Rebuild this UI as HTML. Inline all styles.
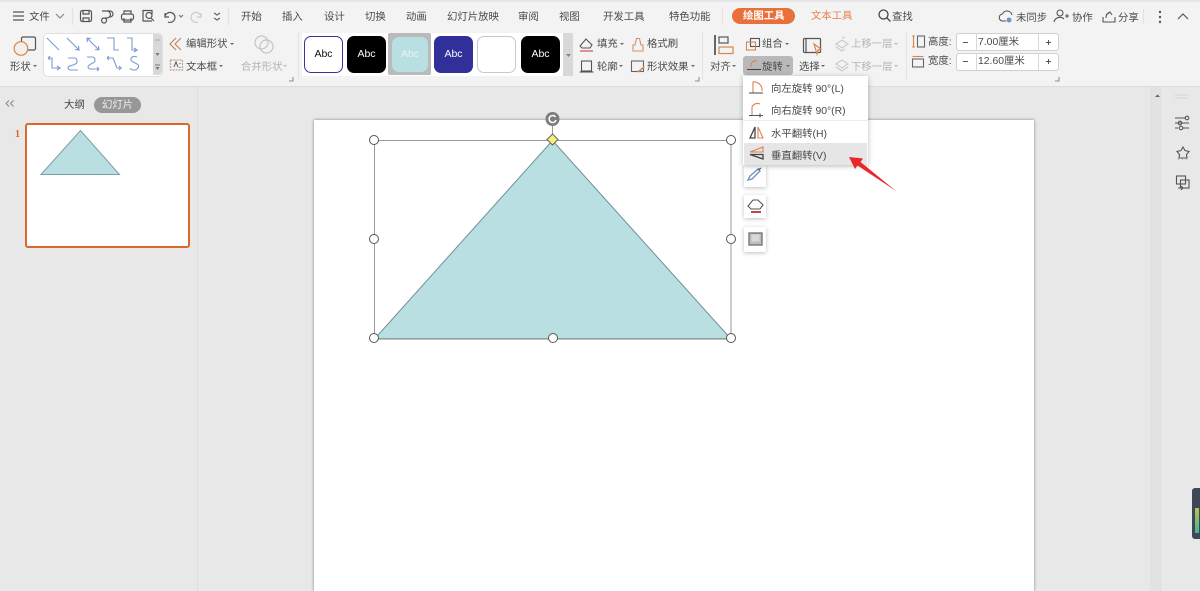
<!DOCTYPE html>
<html style="height:591px;overflow:hidden"><head><meta charset="utf-8">
<style>
html,body{margin:0;padding:0}
body{width:1200px;height:591px;overflow:hidden;position:relative;background:#e8e8e8;font-family:"Liberation Sans","Noto Sans CJK SC",sans-serif;color:#4a4a4a}
.t{position:absolute;font-size:10.4px;line-height:14px;white-space:nowrap}
.g{color:#b4b4b4}
.a{position:absolute}
.c{position:absolute;width:0;height:0;border-left:2px solid transparent;border-right:2px solid transparent;border-top:2.5px solid #666}
.c.l{border-top-color:#bbb}
svg{position:absolute;overflow:visible}
.sw{position:absolute;top:36px;width:39px;height:37px;border-radius:7px;font-size:10.5px;line-height:36px;text-align:center;box-sizing:border-box}
.tb{position:absolute;left:744px;width:22px;background:#fff;box-shadow:0 1px 4px rgba(0,0,0,.25)}
.h{position:absolute;width:8px;height:8px;border:1px solid #555;border-radius:50%;background:#fff}
</style></head><body>
<!-- ribbon -->
<div class="a" style="left:0;top:0;width:1200px;height:2px;background:#e6e6ea"></div>
<div class="a" style="left:0;top:2px;width:1200px;height:84px;background:#f3f3f3;border-bottom:1px solid #dcdcdc"></div>

<!-- top bar -->
<svg style="left:0;top:0" width="230" height="30" fill="none" stroke="#555" stroke-width="1.2">
<path d="M13 12h11M13 16h11M13 20h11"/><path d="M56 14l4 4 4-4" stroke="#888"/>
<rect x="80.500" y="10.500" width="11" height="11" rx="2"/><path d="M83 11v3h6v-3M83 22v-4h6v4"/>
<path d="M102 11h5a3 3 0 0 1 0 7h-2M107 11h3a3 3 0 0 1 0 6M104 18a2.500 2.500 0 1 0 .1 0"/>
<rect x="121.500" y="14" width="12" height="6" rx="2"/><path d="M124 14v-3h7v3M124 18v4h7v-4"/>
<path d="M152 21h-9v-10.500h9v4"/><circle cx="149" cy="15.500" r="3"/><path d="M151 18l3 3"/>
<path d="M165 13v4h4M165 17a5 5 0 1 1 3 5"/><path d="M179 15l2 2 2-2" stroke="#777"/>
<path d="M201 13v4h-4M201 17a5 5 0 1 0-3 5" stroke="#ccc"/>
<path d="M214 13l3 2 3-2M214 18l3 2 3-2" stroke="#666"/>
<path d="M72.500 8v17M228.500 8v17" stroke="#e2e2e2"/>
</svg>
<span class="t" style="left:29px;top:11px">文件</span>

<span class="t" style="left:241px;top:11px">开始</span>
<span class="t" style="left:282px;top:11px">插入</span>
<span class="t" style="left:324px;top:11px">设计</span>
<span class="t" style="left:365px;top:11px">切换</span>
<span class="t" style="left:406px;top:11px">动画</span>
<span class="t" style="left:447px;top:11px">幻灯片放映</span>
<span class="t" style="left:518px;top:11px">审阅</span>
<span class="t" style="left:559px;top:11px">视图</span>
<span class="t" style="left:603px;top:11px">开发工具</span>
<span class="t" style="left:669px;top:11px">特色功能</span>
<div class="a" style="left:722px;top:8px;width:1px;height:17px;background:#e2e2e2"></div>
<div class="a" style="left:732px;top:8px;width:63px;height:16px;border-radius:8px;background:#e8703a"></div>
<span class="t" style="left:743px;top:10px;color:#fff;font-weight:bold">绘图工具</span>
<span class="t" style="left:811px;top:10px;color:#ea8050">文本工具</span>
<svg style="left:878px;top:9px" width="14" height="14" fill="none" stroke="#444" stroke-width="1.3"><circle cx="5.500" cy="5.500" r="4.500"/><path d="M9 9l3.500 3.500"/></svg>
<span class="t" style="left:892px;top:11px">查找</span>

<svg style="left:998px;top:8px" width="170" height="18" fill="none" stroke="#555" stroke-width="1.1">
<path d="M8 13H5a3.500 3.500 0 0 1-.5-7 5 5 0 0 1 9.500 1"/><circle cx="11" cy="12" r="2.500" fill="#6f93c9" stroke="none"/>
<circle cx="62" cy="5" r="3"/><path d="M56 14a6 6 0 0 1 10-3M67 8h4M69 6v4"/>
<path d="M105 9v5h12V9M108 7l4-3 2 3M112 4c-3 1-4 3-4 6"/>
<path d="M145.500 1v15" stroke="#e2e2e2"/>
</svg>
<span class="t" style="left:1016px;top:12px">未同步</span>
<span class="t" style="left:1072px;top:12px">协作</span>
<span class="t" style="left:1118px;top:12px">分享</span>
<svg style="left:1155px;top:10px" width="40" height="14" fill="#555"><circle cx="5" cy="2" r="1.200"/><circle cx="5" cy="7" r="1.200"/><circle cx="5" cy="12" r="1.200"/><path d="M23 9l5-5 5 5" fill="none" stroke="#555" stroke-width="1.200"/></svg>

<!-- shape button -->
<svg style="left:12px;top:34px" width="26" height="24" fill="none">
<rect x="9.500" y="3" width="14" height="13" rx="1.500" stroke="#555" stroke-width="1.200"/>
<circle cx="9" cy="14.500" r="6.800" fill="#f5efe9" stroke="#d9844f" stroke-width="1.200"/>
</svg>
<span class="t" style="left:10px;top:61px">形状</span><div class="c" style="left:33px;top:65px"></div>

<!-- line gallery -->
<div class="a" style="left:43px;top:33px;width:118px;height:42px;background:#fff;border-radius:5px;border:1px solid #e0e0e0"></div>
<div class="a" style="left:153px;top:34px;width:9px;height:41px;background:#d8d8d8;border-radius:0 4px 4px 0"></div>
<svg style="left:43px;top:33px" width="120" height="44" fill="none" stroke="#7c9bd0" stroke-width="1.100">
<path d="M4 5l12 12M24 5l12 12l-4-.5M36 17l-.5-4M44 5l12 12M44 5l4 .5M44 5l.5 4M56 17l-4-.5M56 17l-.5-4M64 5h7v12h5M84 5h5v12h5l-3-2M94 17l-3 2"/>
<path d="M5 25h4v10h8l-3-2M17 35l-3 2M5 25l2-2M5 25l2 2M25 25h6c3 0 3 2 3 3v1c0 2-2 2-4 3-3 1-5 1-5 3 0 1 1 2 3 2h7M44 24h5c3 0 3 2 3 4s-7 3-7 6c0 1 1 2 3 2h8M56 36l-2-2M56 36l-2 2M64 25h6l2 5 2 5h4l-2-2M78 35l-2 2M64 25l2-2M64 25l2 2M94 24c-6-2-8 3-4 5s8 3 4 7c-2 2-6 1-7-1"/>
</svg>
<svg style="left:153px;top:35px" width="9" height="40" fill="#777"><path d="M2 5h5" stroke="#aaa"/><path d="M2.500 18h4l-2 3zM2.500 32h4l-2 3z"/><path d="M2 30h5" stroke="#777"/></svg>

<!-- edit shape -->
<svg style="left:168px;top:36px" width="16" height="38" fill="none" stroke-width="1.200">
<path d="M8 2L2 8l6 6M13 2L7 8l6 6" stroke="#c9835b"/>
<rect x="2.500" y="24" width="12" height="10" stroke="#c9a080" stroke-dasharray="2 1"/>
<path d="M6 31l2-5 2 5M12 27v1M12 31v1" stroke="#555" stroke-width="1"/>
</svg>
<span class="t" style="left:186px;top:38px">编辑形状</span><div class="c" style="left:230px;top:43px"></div>
<span class="t" style="left:186px;top:61px">文本框</span><div class="c" style="left:219px;top:65px"></div>
<svg style="left:254px;top:35px" width="20" height="20" fill="none" stroke="#c4c4c4" stroke-width="1.200"><circle cx="7.500" cy="7.500" r="6.500"/><circle cx="12.500" cy="11.500" r="6.500"/></svg>
<span class="t g" style="left:241px;top:61px">合并形状</span><div class="c l" style="left:283px;top:65px"></div>
<svg style="left:288px;top:76px" width="6" height="6" fill="none" stroke="#888"><path d="M1 5h4V1"/></svg>
<div class="a" style="left:298px;top:32px;width:1px;height:48px;background:#e4e4e4"></div>

<!-- style gallery -->
<div class="a" style="left:302px;top:33px;width:261px;height:43px;background:#fff"></div>
<div class="sw" style="left:304px;background:#fff;border:1.500px solid #3a3494;color:#111;line-height:34px">Abc</div>
<div class="sw" style="left:347px;background:#000;color:#fff">Abc</div>
<div class="a" style="left:388px;top:33px;width:43px;height:42px;background:#bababa;border-radius:2px"></div>
<div class="sw" style="left:392px;top:37px;width:36px;height:35px;line-height:34px;background:#b9dfe2;color:#e6f3f4">Abc</div>
<div class="sw" style="left:434px;background:#31309a;color:#fff">Abc</div>
<div class="sw" style="left:477px;background:#fff;border:1.500px solid #c8c8c8"></div>
<div class="sw" style="left:521px;background:#000;color:#fff">Abc</div>
<div class="a" style="left:563px;top:33px;width:10px;height:43px;background:#d8d8d8"></div>
<svg style="left:565px;top:53px" width="7" height="6" fill="#888"><path d="M1 1h5l-2.500 3z"/></svg>

<!-- fill etc -->
<svg style="left:578px;top:36px" width="18" height="36" fill="none" stroke="#555" stroke-width="1.100">
<path d="M2 10l6-7 6 6-2 3H4z"/><path d="M2 15h13" stroke="#c8473a"/>
<rect x="3.500" y="25" width="10" height="10"/><path d="M1.500 36h14"/>
</svg>
<span class="t" style="left:597px;top:38px">填充</span><div class="c" style="left:620px;top:43px"></div>
<span class="t" style="left:597px;top:61px">轮廓</span><div class="c" style="left:619px;top:65px"></div>
<svg style="left:630px;top:36px" width="16" height="38" fill="none" stroke-width="1.100">
<path d="M3 15V9h2l1.500-6.500h3L11 9h2v6z" stroke="#d49270"/>
<rect x="1.500" y="25" width="12" height="10.500" stroke="#666"/><path d="M8 36l6-5" stroke="#d9844f" stroke-width="1.500"/>
</svg>
<span class="t" style="left:647px;top:38px">格式刷</span>
<span class="t" style="left:647px;top:61px">形状效果</span><div class="c" style="left:691px;top:65px"></div>
<svg style="left:694px;top:76px" width="6" height="6" fill="none" stroke="#888"><path d="M1 5h4V1"/></svg>
<div class="a" style="left:702px;top:32px;width:1px;height:48px;background:#e4e4e4"></div>

<!-- align -->
<svg style="left:713px;top:34px" width="22" height="22" fill="none" stroke-width="1.200">
<path d="M2 1v20" stroke="#444" stroke-width="1.600"/><rect x="6" y="3" width="9" height="6" stroke="#555"/><rect x="6" y="13" width="14" height="6.500" stroke="#d9844f"/>
</svg>
<span class="t" style="left:710px;top:61px">对齐</span><div class="c" style="left:732px;top:65px"></div>
<svg style="left:745px;top:37px" width="16" height="15" fill="none" stroke-width="1.100"><rect x="5.500" y="1.500" width="9" height="8" stroke="#555"/><rect x="1.500" y="5" width="9" height="8" stroke="#d9844f"/></svg>
<span class="t" style="left:762px;top:38px">组合</span><div class="c" style="left:785px;top:43px"></div>
<div class="a" style="left:743px;top:56px;width:50px;height:19px;background:#b9b9b9;border-radius:3px"></div>
<svg style="left:746px;top:58px" width="16" height="15" fill="none" stroke-width="1.100"><path d="M5 9V6a5 5 0 0 1 6-3" stroke="#d9844f"/><path d="M1 11.500h14" stroke="#444"/></svg>
<span class="t" style="left:762px;top:61px">旋转</span><div class="c" style="left:786px;top:65px"></div>
<svg style="left:802px;top:37px" width="20" height="19" fill="none" stroke-width="1.200"><rect x="1.500" y="1.500" width="17" height="14" rx="1" stroke="#555"/><path d="M4 2v13" stroke="#555"/><path d="M12 7l7 5-3 1-1 4z" fill="#f3f3f3" stroke="#d9844f"/></svg>
<span class="t" style="left:799px;top:61px">选择</span><div class="c" style="left:821px;top:65px"></div>
<svg style="left:834px;top:36px" width="16" height="38" fill="none" stroke="#c9c9c9" stroke-width="1.100"><path d="M2 8l6-4 6 4-6 4zM2 11l6 4 3-2M8 2l3-1M2 28l6-4 6 4-6 4zM2 31l6 4 6-4"/></svg>
<span class="t g" style="left:851px;top:38px">上移一层</span><div class="c l" style="left:894px;top:43px"></div>
<span class="t g" style="left:851px;top:61px">下移一层</span><div class="c l" style="left:894px;top:65px"></div>
<div class="a" style="left:906px;top:32px;width:1px;height:48px;background:#e4e4e4"></div>

<!-- size -->
<svg style="left:911px;top:34px" width="16" height="34" fill="none" stroke-width="1.100">
<rect x="6.500" y="2" width="7" height="11" stroke="#666"/><path d="M2.500 2v11M1 2h3M1 13h3" stroke="#d9844f"/>
<rect x="1.500" y="25" width="11" height="8" stroke="#666"/><path d="M1.500 22.500h11" stroke="#d9844f"/>
</svg>
<span class="t" style="left:928px;top:36px">高度:</span>
<span class="t" style="left:928px;top:55px">宽度:</span>
<div class="a" style="left:956px;top:33px;width:101px;height:16px;background:#fff;border:1px solid #d0d0d0;border-radius:3px"></div>
<div class="a" style="left:956px;top:53px;width:101px;height:16px;background:#fff;border:1px solid #d0d0d0;border-radius:3px"></div>
<div class="a" style="left:976px;top:33px;width:1px;height:18px;background:#d8d8d8"></div>
<div class="a" style="left:1038px;top:33px;width:1px;height:18px;background:#d8d8d8"></div>
<div class="a" style="left:976px;top:53px;width:1px;height:18px;background:#d8d8d8"></div>
<div class="a" style="left:1038px;top:53px;width:1px;height:18px;background:#d8d8d8"></div>
<span class="t" style="left:978px;top:36px">7.00厘米</span>
<span class="t" style="left:978px;top:55px">12.60厘米</span>
<svg style="left:960px;top:36px" width="94" height="32" fill="none" stroke="#555"><path d="M3 6.500h5M3 25.500h5M86 6.500h5M88.500 4v5M86 25.500h5M88.500 23v5"/></svg>
<svg style="left:1054px;top:76px" width="6" height="6" fill="none" stroke="#888"><path d="M1 5h4V1"/></svg>

<!-- left panel -->
<div class="a" style="left:197px;top:87px;width:1px;height:504px;background:#dedede"></div>
<svg style="left:5px;top:100px" width="10" height="8" fill="none" stroke="#888"><path d="M4 .5L1 3.500l3 3M8.500 .5l-3 3 3 3"/></svg>
<span class="t" style="left:64px;top:99px;color:#444">大纲</span>
<div class="a" style="left:94px;top:97px;width:47px;height:16px;border-radius:8px;background:#979797"></div>
<span class="t" style="left:102px;top:99px;color:#eee">幻灯片</span>
<span class="t" style="left:15px;top:128px;color:#d9682a;font-family:'Liberation Serif',serif;font-size:10px;font-weight:bold">1</span>
<div class="a" style="left:25px;top:123px;width:161px;height:121px;background:#fff;border:2px solid #d9682a;border-radius:3px"></div>
<svg style="left:0;top:0" width="200" height="200"><path d="M41 174.500L80.500 130.500L119.500 174.500Z" fill="#b9dfe2" stroke="#7f9ea3" stroke-width="1"/></svg>

<!-- right sidebar -->
<div class="a" style="left:1150px;top:87px;width:12px;height:504px;background:#e2e2e2"></div>
<div class="a" style="left:1162px;top:87px;width:1px;height:504px;background:#ececec"></div>
<svg style="left:1150px;top:85px" width="50" height="120" fill="none" stroke="#555" stroke-width="1.100">
<path d="M5 12h5l-2.500-2.500z" fill="#666" stroke="none"/>
<path d="M25 10h13M25 13h13" stroke="#d4d4d4"/>
<path d="M25 33h11M25 38h14M25 43h3M33 43h6"/><circle cx="37" cy="33" r="1.800"/><circle cx="30" cy="38" r="1.800"/><circle cx="31" cy="43" r="1.800"/>
<path d="M33 62l2 3.500 4 1-2.500 3 .5 3.500h-8l.5-3.500-2.500-3 4-1z"/><path d="M29 73l-1 1.500M33 73l-1 1.500M37 73l-1 1.500" stroke="#999"/>
<rect x="26.500" y="91" width="9" height="8"/><rect x="30.500" y="95" width="8.500" height="8"/><path d="M28 103h5M31 101l2 2-2 2"/>
</svg>
<div class="a" style="left:1192px;top:488px;width:8px;height:51px;background:#3f4658;border-radius:3px 0 0 3px"></div>
<div class="a" style="left:1195px;top:508px;width:4px;height:25px;background:linear-gradient(#b6c44a,#3fb59c)"></div>

<!-- slide -->
<div class="a" style="left:314px;top:120px;width:720px;height:471px;background:#fff;box-shadow:0 0 3px rgba(0,0,0,.45)"></div>
<svg style="left:0;top:0" width="1200" height="591" fill="none">
<path d="M374.500 339L552.500 140.500L731 339Z" fill="#b9dfe2" stroke="#6f9096" stroke-width="1"/>
<rect x="374.500" y="140.500" width="356.500" height="198" stroke="#9a9a9a" stroke-width="1"/>
<path d="M552.500 126v14" stroke="#9a9a9a"/>
<circle cx="552.500" cy="119" r="7" fill="#7d7d7d"/>
<path d="M555.500 117a3.500 3.500 0 1 0 .5 3" stroke="#fff" stroke-width="1.500"/>
<path d="M552.500 134l5.500 5.500-5.500 5.500-5.500-5.500z" fill="#f7ef7c" stroke="#666"/>
</svg>
<div class="h" style="left:369px;top:135px"></div>
<div class="h" style="left:726px;top:135px"></div>
<div class="h" style="left:369px;top:234px"></div>
<div class="h" style="left:726px;top:234px"></div>
<div class="h" style="left:369px;top:333px"></div>
<div class="h" style="left:548px;top:333px"></div>
<div class="h" style="left:726px;top:333px"></div>

<!-- mini toolbar -->
<div class="tb" style="top:165px;height:22px"></div>
<div class="tb" style="top:195px;height:23px"></div>
<div class="tb" style="top:227px;height:25px"></div>
<svg style="left:745px;top:162px" width="22" height="92" fill="none" stroke-width="1.100">
<path d="M3 18l2-4 8-7 2 2-8 8z" stroke="#6f93c9" stroke-width="1.400"/><path d="M13 8l3-2" stroke="#555"/>
<path d="M3 44l5-6h5l5 5-3 4H6z" stroke="#555"/><path d="M6 50h10" stroke="#c8473a" stroke-width="2"/>
<rect x="4" y="71" width="13" height="12" fill="#bdbdbd" stroke="#777" stroke-width="1.400"/><rect x="6.500" y="72.500" width="8" height="7" fill="#d8d8d8" stroke="none"/>
</svg>

<!-- dropdown -->
<div class="a" style="left:743px;top:76px;width:125px;height:89px;background:#fff;box-shadow:0 1px 5px rgba(0,0,0,.28)"></div>
<div class="a" style="left:743px;top:120px;width:125px;height:1px;background:#ececec"></div>
<div class="a" style="left:744px;top:143px;width:123px;height:22px;background:#e6e6e6"></div>
<svg style="left:748px;top:80px" width="20" height="84" fill="none" stroke-width="1.100">
<path d="M5 13V2a8 8 0 0 1 9 9" stroke="#d9844f"/><path d="M1 13h14" stroke="#555"/>
<path d="M4 35V27a6 6 0 0 1 8-3" stroke="#d9844f"/><path d="M1 35.500h14M12 33.500v4" stroke="#555"/>
<path d="M7 47L2 58h5z" stroke="#444" stroke-width="1.300"/><path d="M10 47l5 11h-5z" stroke="#d9844f"/>
<path d="M15 67L2 72h13z" stroke="#d9844f"/><path d="M15 79L2 74.500h13z" stroke="#444" stroke-width="1.300"/>
</svg>
<span class="t" style="left:771px;top:83px">向左旋转 90°(L)</span>
<span class="t" style="left:771px;top:105px">向右旋转 90°(R)</span>
<span class="t" style="left:771px;top:128px">水平翻转(H)</span>
<span class="t" style="left:771px;top:150px">垂直翻转(V)</span>

<!-- red arrow -->
<svg style="left:0;top:0" width="1200" height="591"><path d="M849 157L863 158.500L860.500 162L896 191L857.500 165.500L855 169Z" fill="#e8262c"/></svg>
</body></html>
